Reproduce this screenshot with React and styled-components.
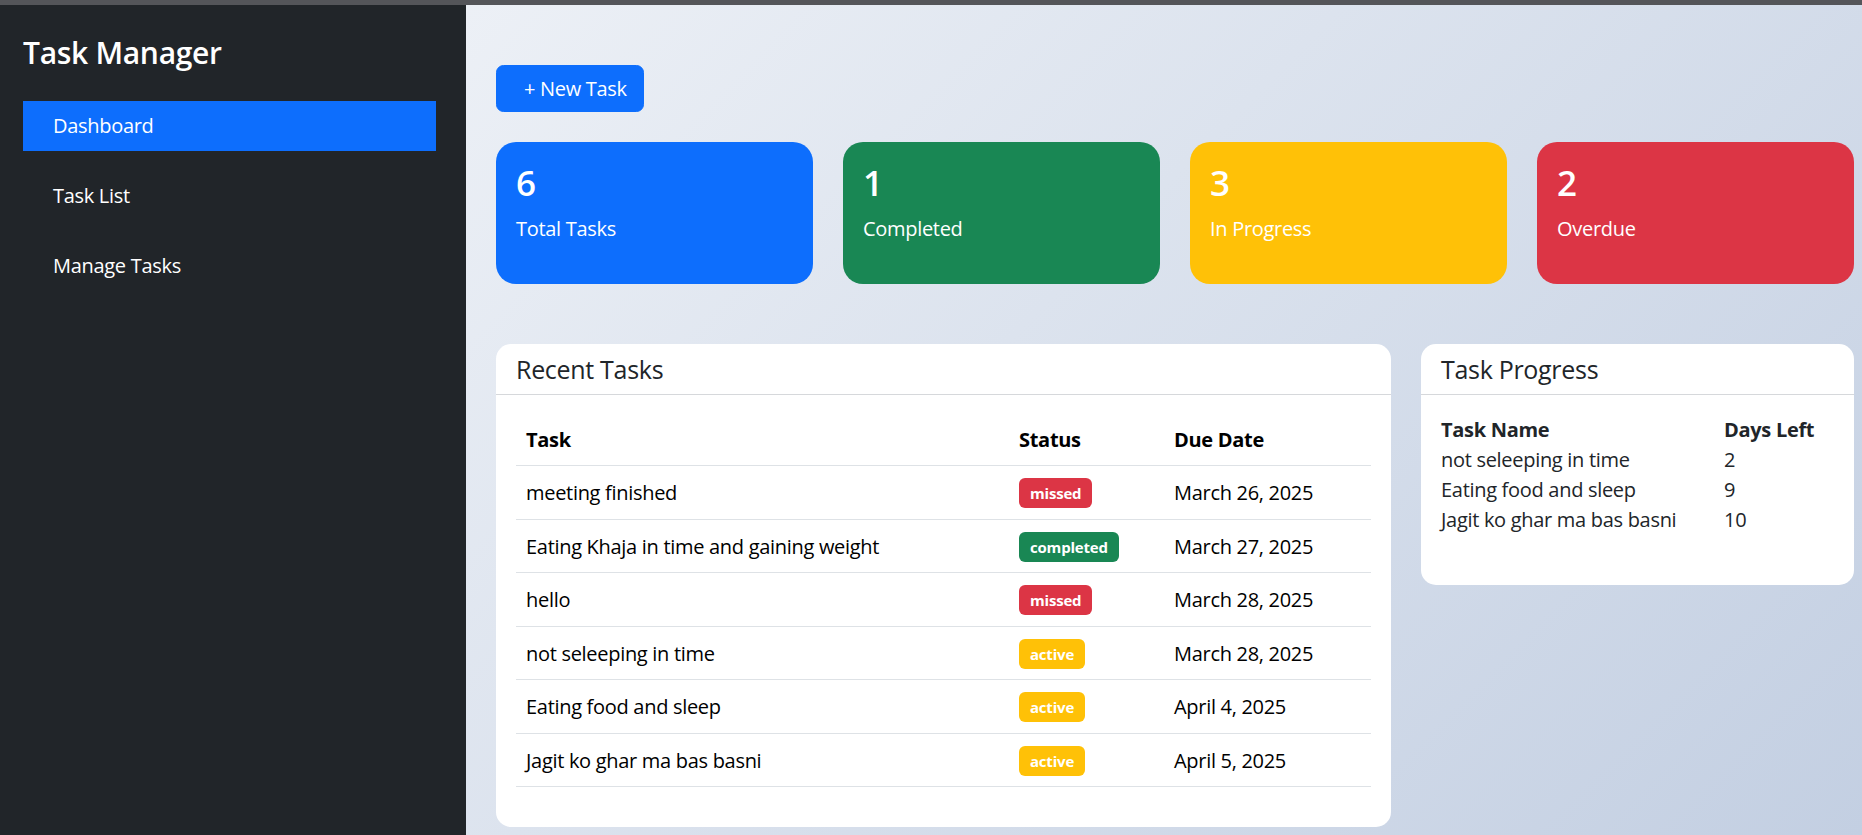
import React from "react";
import styled, { createGlobalStyle } from "styled-components";

const GlobalStyle = createGlobalStyle`
  * {
    box-sizing: border-box;
  }

  body {
    margin: 0;
    font-family: "Open Sans", "Noto Sans", sans-serif;
    font-size: 20px;
    line-height: 1.5;
    letter-spacing: -0.3px;
    color: #212529;
    overflow: hidden;
  }
`;

const colors = {
  primary: "#0d6efd",
  success: "#198754",
  warning: "#ffc107",
  danger: "#dc3545",
  dark: "#212529",
  border: "#dee2e6",
};

const Page = styled.div`
  min-height: 835px;
  background: linear-gradient(135deg, #f5f7fa 0%, #c3cfe2 100%);
`;

const TopBar = styled.div`
  height: 5px;
  background-color: #545559;
`;

const Layout = styled.div`
  display: flex;
  min-height: 830px;
`;

const Sidebar = styled.aside`
  width: 466px;
  flex-shrink: 0;
  background-color: ${colors.dark};
  padding: 30px 30px 0 23px;
  color: white;
`;

const Brand = styled.h4`
  margin: 0 0 30px;
  font-size: 30px;
  font-weight: 600;
  line-height: 36px;
`;

const NavList = styled.nav`
  display: flex;
  flex-direction: column;
  gap: 20px;
`;

const NavItem = styled.a`
  display: block;
  height: 50px;
  padding: 0 30px;
  line-height: 50px;
  color: white;
  text-decoration: none;
  background-color: ${(p) => (p.$active ? colors.primary : "transparent")};
`;

const Main = styled.main`
  flex: 1;
  padding: 60px 0 0 30px;
  overflow: hidden;
`;

const NewTaskButton = styled.button`
  display: block;
  height: 47px;
  padding: 0 16px 0 27px;
  margin-bottom: 30px;
  border: 1px solid ${colors.primary};
  border-radius: 7.5px;
  background-color: ${colors.primary};
  color: white;
  font-family: inherit;
  font-size: 20px;
  letter-spacing: inherit;
  line-height: 30px;
  cursor: pointer;
`;

const StatsGrid = styled.div`
  display: grid;
  grid-template-columns: repeat(4, 317px);
  gap: 30px;
  margin-bottom: 60px;
`;

const StatCard = styled.div`
  padding: 20px;
  border-radius: 20px;
  background-color: ${(p) => p.$bg};
  color: white;
`;

const StatNumber = styled.h3`
  margin: 0 0 10px;
  font-size: 35px;
  font-weight: 600;
  line-height: 42px;
`;

const StatLabel = styled.p`
  margin: 0 0 20px;
  line-height: 30px;
`;

const ContentGrid = styled.div`
  display: grid;
  grid-template-columns: 895px 433px;
  gap: 30px;
  align-items: start;
`;

const Card = styled.section`
  background-color: white;
  border-radius: 15px;
  overflow: hidden;
`;

const CardHeader = styled.h5`
  margin: 0;
  padding: 10px 20px;
  font-size: 25px;
  font-weight: 500;
  line-height: 30px;
  border-bottom: 1px solid #d6d8db;
`;

const CardBody = styled.div`
  padding: 20px;
`;

const TaskTable = styled.table`
  width: 100%;
  border-collapse: collapse;
  margin-bottom: 20px;

  th,
  td {
    text-align: left;
    border-bottom: 1px solid ${colors.border};
    line-height: 30px;
  }

  th {
    padding: 10px;
    font-weight: 700;
    color: #000;
  }

  td {
    padding: 12px 10px 10.5px;
    color: #000;
  }
`;

const Badge = styled.span`
  display: inline-block;
  vertical-align: top;
  height: 30px;
  padding: 0 11px;
  border-radius: 6px;
  background-color: ${(p) => p.$bg};
  color: white;
  font-size: 15px;
  font-weight: 700;
  letter-spacing: -0.2px;
  line-height: 30px;
`;

const ProgressTable = styled.table`
  width: 100%;
  border-collapse: collapse;
  margin-bottom: 30px;

  th,
  td {
    padding: 0;
    text-align: left;
    line-height: 30px;
  }

  th {
    font-weight: 700;
  }
`;

const stats = [
  { value: 6, label: "Total Tasks", bg: colors.primary },
  { value: 1, label: "Completed", bg: colors.success },
  { value: 3, label: "In Progress", bg: colors.warning },
  { value: 2, label: "Overdue", bg: colors.danger },
];

const statusColors = {
  missed: colors.danger,
  completed: colors.success,
  active: colors.warning,
};

const tasks = [
  { name: "meeting finished", status: "missed", due: "March 26, 2025" },
  { name: "Eating Khaja in time and gaining weight", status: "completed", due: "March 27, 2025" },
  { name: "hello", status: "missed", due: "March 28, 2025" },
  { name: "not seleeping in time", status: "active", due: "March 28, 2025" },
  { name: "Eating food and sleep", status: "active", due: "April 4, 2025" },
  { name: "Jagit ko ghar ma bas basni", status: "active", due: "April 5, 2025" },
];

const progress = [
  { name: "not seleeping in time", days: 2 },
  { name: "Eating food and sleep", days: 9 },
  { name: "Jagit ko ghar ma bas basni", days: 10 },
];

const App = () => {
  return (
    <Page>
      <GlobalStyle />
      <TopBar />
      <Layout>
        <Sidebar>
          <Brand>Task Manager</Brand>
          <NavList>
            <NavItem href="#" $active>
              Dashboard
            </NavItem>
            <NavItem href="#">Task List</NavItem>
            <NavItem href="#">Manage Tasks</NavItem>
          </NavList>
        </Sidebar>

        <Main>
          <NewTaskButton>+ New Task</NewTaskButton>

          <StatsGrid>
            {stats.map((s) => (
              <StatCard key={s.label} $bg={s.bg}>
                <StatNumber>{s.value}</StatNumber>
                <StatLabel>{s.label}</StatLabel>
              </StatCard>
            ))}
          </StatsGrid>

          <ContentGrid>
            <Card>
              <CardHeader>Recent Tasks</CardHeader>
              <CardBody>
                <TaskTable>
                  <colgroup>
                    <col style={{ width: 493 }} />
                    <col style={{ width: 155 }} />
                    <col />
                  </colgroup>
                  <thead>
                    <tr>
                      <th>Task</th>
                      <th>Status</th>
                      <th>Due Date</th>
                    </tr>
                  </thead>
                  <tbody>
                    {tasks.map((t, i) => (
                      <tr key={i}>
                        <td>{t.name}</td>
                        <td>
                          <Badge $bg={statusColors[t.status]}>{t.status}</Badge>
                        </td>
                        <td>{t.due}</td>
                      </tr>
                    ))}
                  </tbody>
                </TaskTable>
              </CardBody>
            </Card>

            <Card>
              <CardHeader>Task Progress</CardHeader>
              <CardBody>
                <ProgressTable>
                  <colgroup>
                    <col style={{ width: 283 }} />
                    <col />
                  </colgroup>
                  <thead>
                    <tr>
                      <th>Task Name</th>
                      <th>Days Left</th>
                    </tr>
                  </thead>
                  <tbody>
                    {progress.map((p) => (
                      <tr key={p.name}>
                        <td>{p.name}</td>
                        <td>{p.days}</td>
                      </tr>
                    ))}
                  </tbody>
                </ProgressTable>
              </CardBody>
            </Card>
          </ContentGrid>
        </Main>
      </Layout>
    </Page>
  );
};

export default App;
